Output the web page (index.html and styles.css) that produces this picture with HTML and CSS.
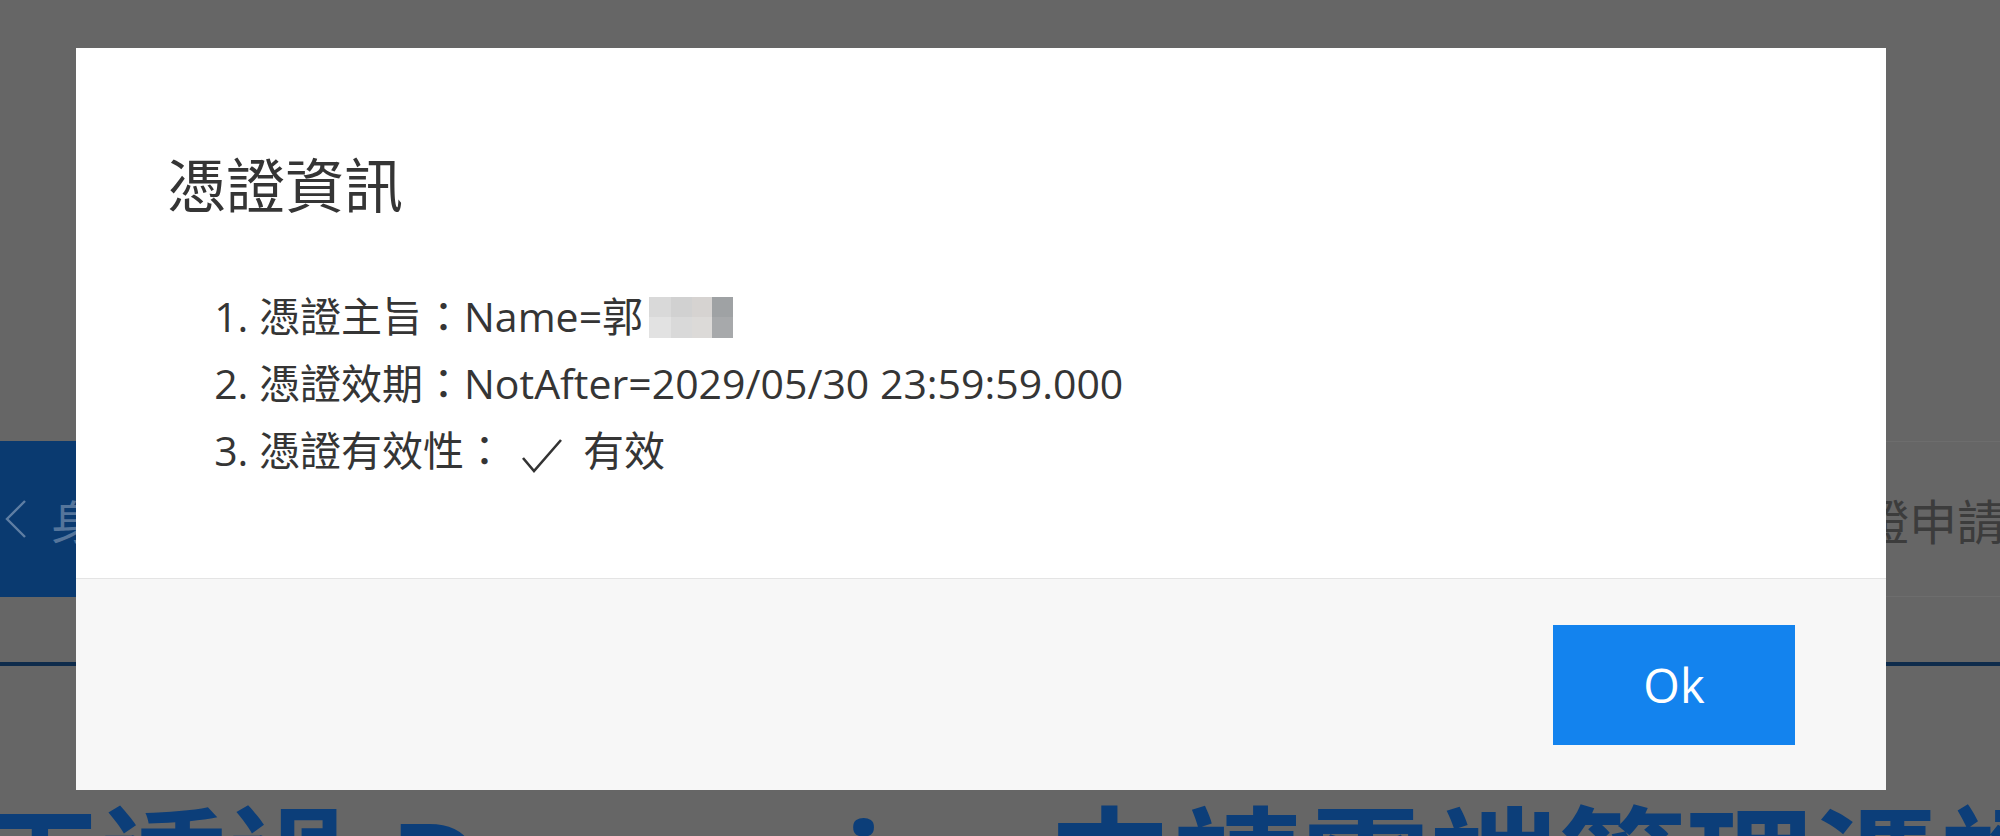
FILE: index.html
```html
<!DOCTYPE html>
<html lang="zh-Hant">
<head>
<meta charset="utf-8">
<title>憑證資訊</title>
<link rel="stylesheet" href="styles.css">
</head>
<body>
<div class="page">
  <div class="tabs">
    <div class="tab-back">
      <svg class="chev" viewBox="0 0 22 38" width="22" height="38"><polyline points="20,1 2,19 20,37" fill="none" stroke="#5f7ea3" stroke-width="2.4"/></svg>
      <span>身分驗證</span>
    </div>
    <div class="tab-next">憑證申請</div>
  </div>
  <div class="rule"></div>
  <h1 class="headline">正透過 Dynamics 申請雲端管理憑證</h1>
</div>

<div class="modal">
  <div class="modal-body">
    <h2 class="modal-title">憑證資訊</h2>
    <ol class="info-list">
      <li>憑證主旨：Name=郭<span class="redact"><i class="r1"></i><i class="r2"></i><i class="r3"></i><i class="r4"></i></span></li>
      <li>憑證效期：NotAfter=2029/05/30 23:59:59.000</li>
      <li>憑證有效性：<svg class="check" viewBox="0 0 42 36" width="42" height="36"><polyline points="2,20 13,33 40,2" fill="none" stroke="#333" stroke-width="2.6"/></svg>有效</li>
    </ol>
  </div>
  <div class="modal-footer">
    <button class="btn-ok" type="button">Ok</button>
  </div>
</div>
</body>
</html>
```
FILE: styles.css
```css
html, body {
  margin: 0;
  padding: 0;
}
body {
  width: 2000px;
  height: 836px;
  overflow: hidden;
  background: #666666;
  font-family: "Open Sans", "Noto Sans CJK TC", sans-serif;
  color: #333333;
}

/* dimmed page behind the dialog */
.page {
  padding-top: 441px;
}
.tabs {
  height: 156px;
  display: flex;
  justify-content: space-between;
  align-items: stretch;
}
.tab-back {
  width: 640px;
  background: #0a3a70;
  color: #55759b;
  font-size: 46px;
  display: flex;
  align-items: center;
  gap: 24px;
  padding-left: 5px;
  font-family: "Noto Sans CJK TC", sans-serif;
}
.chev {
  display: block;
}
.tab-next {
  width: 620px;
  margin-right: -5px;
  border-top: 1px solid #6d6d6d;
  border-bottom: 1px solid #6d6d6d;
  display: flex;
  align-items: center;
  justify-content: flex-end;
  font-size: 48px;
  color: #3c3c3c;
  font-family: "Noto Sans CJK TC", sans-serif;
}
.rule {
  margin-top: 65px;
  height: 4px;
  background: #0e2b4b;
}
.headline {
  margin: 136px 0 0 0;
  text-indent: -28px;
  white-space: nowrap;
  font-size: 128px;
  line-height: 1;
  font-weight: 700;
  color: #0c3e79;
}

/* dialog */
.modal {
  position: absolute;
  left: 76px;
  top: 48px;
  width: 1810px;
  height: 742px;
  background: #ffffff;
  display: flex;
  flex-direction: column;
}
.modal-body {
  height: 530px;
  padding: 102px 0 0 91px;
  box-sizing: border-box;
}
.modal-title {
  margin: 0;
  font-size: 59px;
  line-height: 1.2;
  font-weight: 400;
  color: #353535;
}
.info-list {
  margin: 62px 0 0 0;
  padding-left: 92px;
  font-size: 41px;
  line-height: 67px;
  color: #353535;
}
.info-list li {
  white-space: nowrap;
}
.redact {
  display: inline-grid;
  grid-template-columns: 22px 21px 20px 21px;
  width: 84px;
  height: 41px;
  margin-left: 6px;
  vertical-align: -6px;
}
.redact i {
  display: block;
}
.redact .r1 { background: linear-gradient(#d9d9d9 50%, #e2e2e2 50%); }
.redact .r2 { background: linear-gradient(#d1d1d1 50%, #d9d9d9 50%); }
.redact .r3 { background: linear-gradient(#d6d3d1 50%, #dcdad8 50%); }
.redact .r4 { background: linear-gradient(#9fa2a4 50%, #a7a9ab 50%); }
.check {
  display: inline-block;
  vertical-align: -8px;
  margin: 0 20px 0 16px;
}

.modal-footer {
  flex: 1;
  background: #f7f7f7;
  border-top: 1px solid #e4e4e4;
  display: flex;
  justify-content: flex-end;
  align-items: flex-start;
  padding: 46px 91px 0 0;
}
.btn-ok {
  width: 242px;
  height: 120px;
  border: 0;
  border-radius: 0;
  background: #1383ee;
  color: #ffffff;
  font-family: "Open Sans", sans-serif;
  font-size: 47px;
  padding: 0;
  cursor: pointer;
}
```
